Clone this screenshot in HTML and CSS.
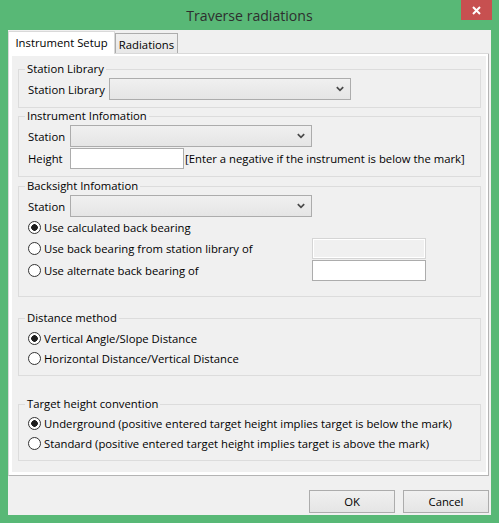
FILE: index.html
```html
<!DOCTYPE html>
<html lang="en">
<head>
<meta charset="utf-8">
<title>Traverse radiations</title>
<link rel="stylesheet" href="styles.css">
</head>
<body>
<div class="window">
  <header class="titlebar">
    <h1 class="title">Traverse radiations</h1>
    <button class="close" aria-label="Close"><svg width="9" height="9" viewBox="0 0 9 9"><path d="M1 1L8 8M8 1L1 8" stroke="#fff" stroke-width="2"/></svg></button>
  </header>
  <div class="client">
    <div class="tabs">
      <div class="tab active">Instrument Setup</div>
      <div class="tab">Radiations</div>
    </div>
    <div class="pane">
      <div class="page">
        <fieldset class="group g1">
          <legend>Station Library</legend>
          <div class="form form-lib">
            <span class="lbl">Station Library</span>
            <div class="combo"><svg width="8" height="6" viewBox="0 0 8 6"><path d="M0.8 1.2L4 4.4L7.2 1.2" fill="none" stroke="#4a4a4a" stroke-width="1.7"/></svg></div>
          </div>
        </fieldset>

        <fieldset class="group g2">
          <legend>Instrument Infomation</legend>
          <div class="form form-short">
            <span class="lbl">Station</span>
            <div class="combo"><svg width="8" height="6" viewBox="0 0 8 6"><path d="M0.8 1.2L4 4.4L7.2 1.2" fill="none" stroke="#4a4a4a" stroke-width="1.7"/></svg></div>
            <span class="lbl">Height</span>
            <div class="height-cell">
              <input class="field" type="text">
              <span class="hint">[Enter a negative if the instrument is below the mark]</span>
            </div>
          </div>
        </fieldset>

        <fieldset class="group g3">
          <legend>Backsight Infomation</legend>
          <div class="form form-short">
            <span class="lbl">Station</span>
            <div class="combo"><svg width="8" height="6" viewBox="0 0 8 6"><path d="M0.8 1.2L4 4.4L7.2 1.2" fill="none" stroke="#4a4a4a" stroke-width="1.7"/></svg></div>
          </div>
          <div class="bs-options">
            <label class="radio r1"><input type="radio" name="bs" checked><span>Use calculated back bearing</span></label>
            <label class="radio r2"><input type="radio" name="bs"><span>Use back bearing from station library of</span></label>
            <input class="field disabled" type="text" disabled>
            <label class="radio r3"><input type="radio" name="bs"><span>Use alternate back bearing of</span></label>
            <input class="field f3" type="text">
          </div>
        </fieldset>

        <fieldset class="group g4">
          <legend>Distance method</legend>
          <div class="radios">
            <label class="radio"><input type="radio" name="dm" checked><span>Vertical Angle/Slope Distance</span></label>
            <label class="radio"><input type="radio" name="dm"><span>Horizontal Distance/Vertical Distance</span></label>
          </div>
        </fieldset>

        <fieldset class="group g5">
          <legend>Target height convention</legend>
          <div class="radios">
            <label class="radio"><input type="radio" name="th" checked><span>Underground (positive entered target height implies target is below the mark)</span></label>
            <label class="radio"><input type="radio" name="th"><span>Standard (positive entered target height implies target is above the mark)</span></label>
          </div>
        </fieldset>
      </div>
    </div>
    <div class="buttons">
      <button class="btn">OK</button>
      <button class="btn">Cancel</button>
    </div>
  </div>
</div>
</body>
</html>
```

FILE: styles.css
```css
* { box-sizing: border-box; }
html, body { margin: 0; padding: 0; }
body {
  font-family: "Open Sans", "Noto Sans", "Liberation Sans", sans-serif;
  font-size: 11.3px;
  color: #000;
  background: #58b876;
}
.window {
  width: 499px;
  height: 523px;
  background: #58b876;
  display: flex;
  flex-direction: column;
}
.titlebar {
  height: 30px;
  display: grid;
  grid-template-columns: 1fr auto 1fr;
}
.title {
  grid-column: 2;
  margin: 0;
  font-weight: normal;
  font-size: 14.1px;
  line-height: 31px;
  color: #2e2e2e;
}
.close {
  grid-column: 3;
  justify-self: end;
  align-self: start;
  width: 31px;
  height: 20px;
  margin-right: 7px;
  border: 0;
  padding: 0;
  background: #c75050;
  display: flex;
  align-items: center;
  justify-content: center;
}
.client {
  flex: 1;
  margin: 0 8px 8px;
  background: #f0f0f0;
  display: flex;
  flex-direction: column;
  padding: 1px 2px 2px 0;
}
.tabs {
  display: flex;
  align-items: flex-end;
  height: 23px;
  border-bottom: 1px solid #d9d9d9;
}
.tab {
  height: 20px;
  width: 63px;
  border: 1px solid #acacac;
  border-bottom: 0;
  background: linear-gradient(#f0f0f0, #e8e8e8);
  text-align: center;
  line-height: 19px;
  padding-top: 1px;
}
.tab.active {
  width: 107px;
  height: 23px;
  margin-bottom: -1px;
  background: #fff;
  border-color: #d9d9d9;
  line-height: 21px;
  padding-top: 0;
}
.pane {
  flex: 1;
  background: #fff;
  border: 1px solid #d9d9d9;
  border-right-color: #b4b4b4;
  border-bottom-color: #b4b4b4;
  border-top: 0;
  padding: 2px 2px 3px 3px;
  display: flex;
}
.page {
  flex: 1;
  background: #f0f0f0;
  padding: 5px 5px 0 6px;
}
.group {
  margin: 0;
  padding: 0 6px 7px;
  border: 1px solid #dcdcdc;
  min-width: 0;
}
.group legend {
  padding: 0 2px;
  line-height: 16px;
}
.form {
  display: grid;
  align-items: center;
  padding-left: 3px;
  margin-top: 1px;
  row-gap: 1px;
}
.form-lib { grid-template-columns: 81px 242px; }
.form-short { grid-template-columns: 42px 242px; }
.combo {
  height: 22px;
  border: 1px solid #acacac;
  background: linear-gradient(#f0f0f0, #e5e5e5);
  display: flex;
  align-items: center;
  justify-content: flex-end;
  padding-right: 6px;
}
.height-cell {
  display: flex;
  align-items: center;
  width: 420px;
}
.field {
  width: 114px;
  height: 21px;
  margin: 0;
  border: 1px solid #acacac;
  background: #fff;
  font: inherit;
  padding: 0 3px;
}
.field.disabled {
  border-color: #d5d5d5;
  background: #f0f0f0;
  box-shadow: inset 0 0 0 1px #fff;
}
.hint {
  margin-left: 1px;
  white-space: nowrap;
}
.g3 { margin-top: 1px; padding-bottom: 15px; }
.g4 { margin-top: 13px; }
.g5 { margin-top: 20px; }
.bs-options {
  display: grid;
  grid-template-columns: 284px 114px;
  grid-template-rows: 20px 21px 21px;
  row-gap: 1px;
  padding-left: 3px;
}
.bs-options .r1 { grid-column: 1 / 3; }
.radios {
  display: flex;
  flex-direction: column;
  padding-left: 3px;
  margin-top: 2px;
}
.g5 .radios { margin-top: 1px; }
.radios .radio { height: 20px; }
.radio {
  display: flex;
  align-items: center;
  gap: 3px;
  white-space: nowrap;
}
.radio input {
  appearance: none;
  -webkit-appearance: none;
  margin: 0;
  width: 13px;
  height: 13px;
  border: 1px solid #333;
  border-radius: 50%;
  background: #fff;
  flex: none;
}
.radio input:checked {
  background: radial-gradient(circle, #1e1e1e 0 3px, #fff 3.6px);
}
.buttons {
  display: flex;
  justify-content: flex-end;
  gap: 8px;
  margin-top: 14px;
}
.btn {
  width: 86px;
  height: 23px;
  border: 1px solid #acacac;
  background: linear-gradient(#f0f0f0, #e5e5e5);
  font: inherit;
  color: #000;
  padding: 0;
}
```
